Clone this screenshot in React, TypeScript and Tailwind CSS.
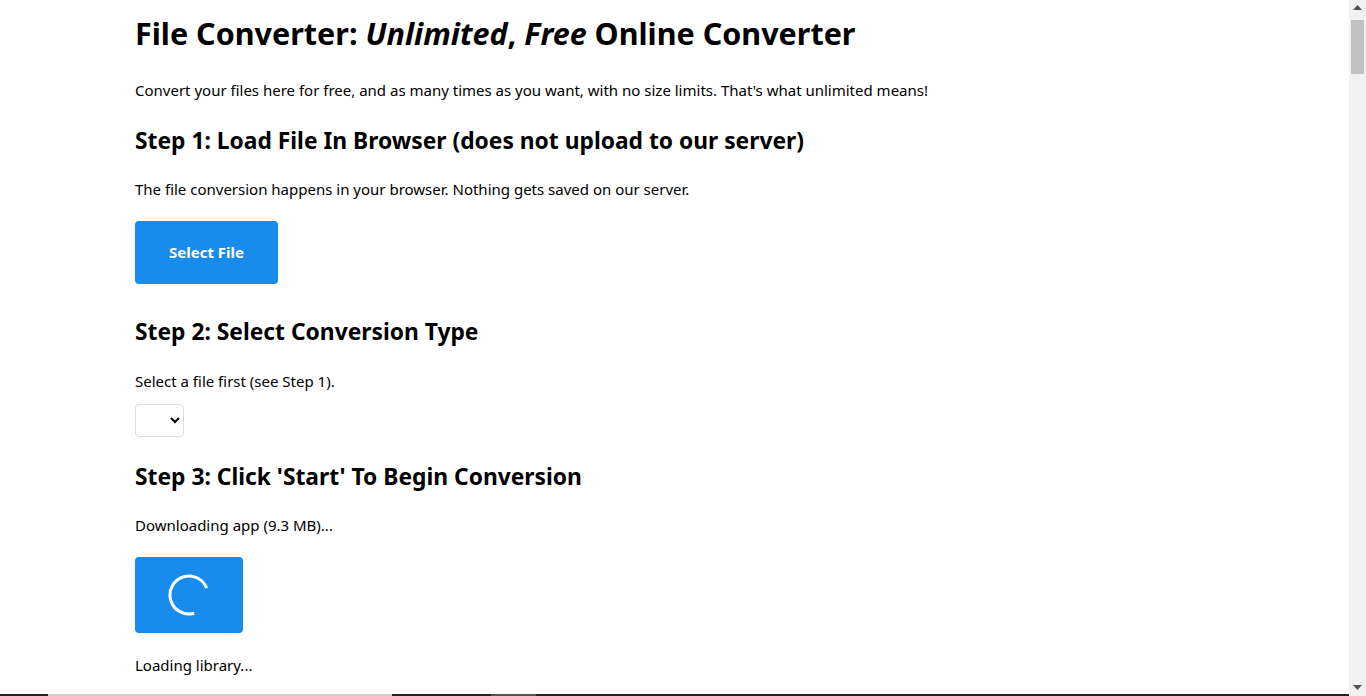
const ARC_R = 19;
const ARC_C = 2 * Math.PI * ARC_R;

function Spinner() {
  return (
    <svg width="44" height="44" viewBox="0 0 44 44">
      {/* ~265° arc, gap on the right side */}
      <circle
        cx="22"
        cy="22"
        r={ARC_R}
        fill="none"
        stroke="white"
        strokeWidth="3"
        strokeDasharray={`${ARC_C * 0.73} ${ARC_C}`}
        transform="rotate(74 22 22)"
      />
    </svg>
  );
}

function Scrollbar() {
  return (
    <aside className="flex w-[17px] shrink-0 flex-col items-center bg-[#f1f1f1]">
      <svg width="9" height="5" viewBox="0 0 9 5" className="mt-[5px]">
        <path d="M4.5 0 L9 5 L0 5 Z" fill="#505050" />
      </svg>
      <div className="mt-[10px] h-[54px] w-[13px] bg-[#c1c1c1]" />
      <div className="flex-1" />
      <svg width="9" height="5" viewBox="0 0 9 5" className="mb-[6px]">
        <path d="M0 0 L9 0 L4.5 5 Z" fill="#505050" />
      </svg>
    </aside>
  );
}

export default function App() {
  const text = "text-[15px] leading-6";
  const heading = "text-[22.8px] font-bold leading-8";
  return (
    <div
      className="flex h-[696px] overflow-hidden bg-white text-black"
      style={{ fontFamily: "'Noto Sans', 'Open Sans', sans-serif" }}
    >
      <div className="flex min-w-0 flex-1 flex-col">
        <main className="flex-1 overflow-hidden pl-[135px] pt-[13px]">
          <h1 className="text-[30.5px] font-bold leading-10">
            File Converter: <i>Unlimited</i>, <i>Free</i> Online Converter
          </h1>

          <p className={`mt-[25px] ${text}`}>
            Convert your files here for free, and as many times as you want, with no size limits. That's what
            unlimited means!
          </p>

          <h2 className={`mt-[23px] ${heading}`}>Step 1: Load File In Browser (does not upload to our server)</h2>
          <p className={`mt-5 ${text}`}>
            The file conversion happens in your browser. Nothing gets saved on our server.
          </p>
          <button
            type="button"
            className="mt-5 flex h-[63px] w-[143px] items-center justify-center rounded-[4px] bg-[#188cec] text-[15px] font-bold text-white"
          >
            Select File
          </button>

          <h2 className={`mt-8 ${heading}`}>Step 2: Select Conversion Type</h2>
          <p className={`mt-[21px] ${text}`}>Select a file first (see Step 1).</p>
          <select className="mt-[11px] block h-[33px] w-[49px] rounded-[4px] border border-[#dcdcdc] bg-white px-1 text-[14px]">
            <option value=""></option>
          </select>

          <h2 className={`mt-6 ${heading}`}>Step 3: Click 'Start' To Begin Conversion</h2>
          <p className={`mt-5 ${text}`}>Downloading app (9.3 MB)...</p>
          <button
            type="button"
            className="mt-5 flex h-[76px] w-[108px] items-center justify-center rounded-[4px] bg-[#188cec]"
            aria-label="Loading"
          >
            <Spinner />
          </button>
          <p className={`mt-5 ${text}`}>Loading library...</p>
        </main>

        {/* edge of the taskbar peeking in at the bottom */}
        <div className="flex h-[2px] shrink-0 bg-[#222222]">
          <div className="w-[48px]" />
          <div className="w-[344px] bg-[#cfcfcf]" />
          <div className="w-[99px]" />
          <div className="w-[45px] bg-[#555555]" />
        </div>
      </div>
      <Scrollbar />
    </div>
  );
}
